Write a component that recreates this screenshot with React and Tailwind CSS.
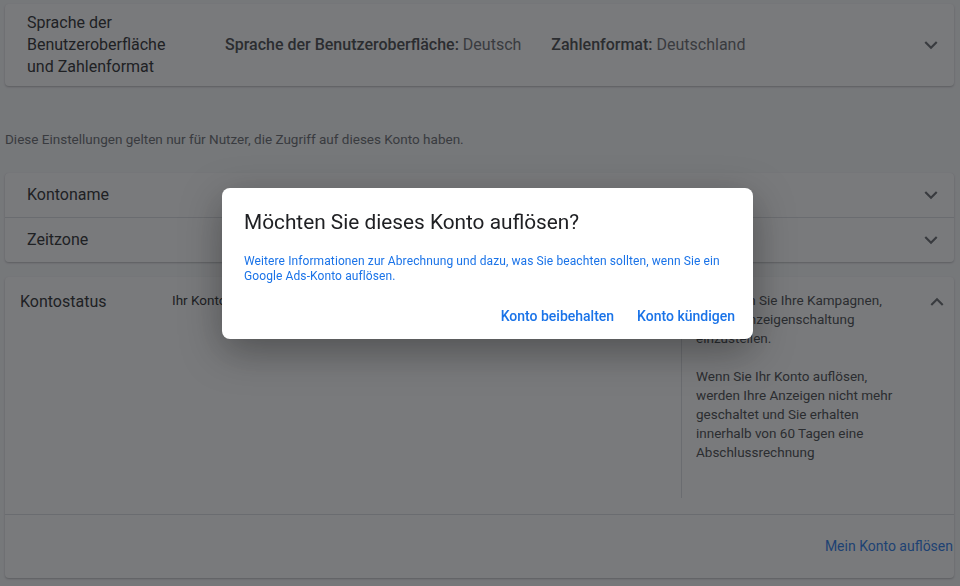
import React from "react";

// Material-style chevrons
const ChevronDown = () => (
  <svg width="26" height="26" viewBox="0 0 24 24" className="fill-[#5f6368]">
    <path d="M16.59 8.59L12 13.17 7.41 8.59 6 10l6 6 6-6z" />
  </svg>
);

const ChevronUp = () => (
  <svg width="26" height="26" viewBox="0 0 24 24" className="fill-[#5f6368]">
    <path d="M12 8l-6 6 1.41 1.41L12 10.83l4.59 4.58L18 14z" />
  </svg>
);

function SimpleRow({ title }) {
  return (
    <div className="flex h-[44px] items-center bg-white pl-[22px] pr-[10px]">
      <div className="flex-1 text-[16px] text-[#202124]">{title}</div>
      <ChevronDown />
    </div>
  );
}

function ConfirmDialog() {
  return (
    <div className="fixed left-[222px] top-[188px] flex h-[151px] w-[531px] flex-col rounded-lg bg-white shadow-[0_12px_40px_rgba(0,0,0,0.35)]">
      <div className="px-[22px] pt-[19px]">
        <h2 className="text-[20.8px] leading-[30px] text-[#202124]">
          Möchten Sie dieses Konto auflösen?
        </h2>
        <p className="mt-[17px] text-[12px] leading-[15px] tracking-[0.1px] text-[#1a73e8]">
          Weitere Informationen zur Abrechnung und dazu, was Sie beachten sollten, wenn Sie ein
          <br />
          Google Ads-Konto auflösen.
        </p>
      </div>
      <div className="mt-auto flex justify-end gap-[7px] pb-[5px] pr-[10px]">
        <button className="h-[36px] px-2 text-[14px] font-medium text-[#1a73e8]">Konto beibehalten</button>
        <button className="h-[36px] px-2 text-[14px] font-medium text-[#1a73e8]">Konto kündigen</button>
      </div>
    </div>
  );
}

export default function App() {
  return (
    <div className="relative h-[586px] overflow-hidden bg-[#f8f9fa] font-[Roboto,sans-serif]">
      <div className="pl-[5px] pr-[6px] pt-[4px]">
        {/* Sprache / Zahlenformat */}
        <div className="flex h-[82px] items-center rounded-sm bg-white pl-[22px] pr-[10px] shadow-[0_1px_2px_rgba(60,64,67,0.35)]">
          <div className="w-[198px] text-[16px] leading-[22px] text-[#202124]">
            Sprache der
            <br />
            Benutzeroberfläche
            <br />
            und Zahlenformat
          </div>
          <div className="flex flex-1 gap-[30px] text-[16px] text-[#5f6368]">
            <span>
              <span className="font-medium text-[#3c4043]">Sprache der Benutzeroberfläche:</span> Deutsch
            </span>
            <span>
              <span className="font-medium text-[#3c4043]">Zahlenformat:</span> Deutschland
            </span>
          </div>
          <ChevronDown />
        </div>

        <p className="mt-[44px] text-[13.5px] leading-[18px] text-[#5f6368]">
          Diese Einstellungen gelten nur für Nutzer, die Zugriff auf dieses Konto haben.
        </p>

        {/* Kontoname / Zeitzone */}
        <div className="mt-[25px] flex flex-col gap-px overflow-hidden rounded-sm bg-[#dadce0] shadow-[0_1px_2px_rgba(60,64,67,0.35)]">
          <SimpleRow title="Kontoname" />
          <SimpleRow title="Zeitzone" />
        </div>

        {/* Kontostatus */}
        <div className="mt-[15px] flex h-[301px] flex-col rounded-sm bg-white shadow-[0_1px_2px_rgba(60,64,67,0.35)]">
          <div className="flex flex-1 pt-[14px]">
            <div className="w-[167px] pl-[15px] text-[16px] leading-[22px] text-[#202124]">Kontostatus</div>
            <div className="w-[509px] text-[13.5px] leading-[18px] text-[#202124]">Ihr Konto ist aktiv.</div>
            <div className="mb-[16px] mt-[-6px] w-px bg-[#dadce0]" />
            <div className="w-[222px] pl-[14px] text-[13.5px] leading-[19px] text-[#3c4043]">
              Pausieren Sie Ihre Kampagnen,
              <br />
              um die Anzeigenschaltung
              <br />
              einzustellen.
              <br />
              <br />
              Wenn Sie Ihr Konto auflösen,
              <br />
              werden Ihre Anzeigen nicht mehr
              <br />
              geschaltet und Sie erhalten
              <br />
              innerhalb von 60 Tagen eine
              <br />
              Abschlussrechnung
            </div>
            <div className="ml-auto mt-[-2px] pr-[4px]">
              <ChevronUp />
            </div>
          </div>
          <div className="flex h-[64px] items-center justify-end border-t border-[#dadce0] pr-[1px]">
            <button className="text-[14px] text-[#1a73e8]">Mein Konto auflösen</button>
          </div>
        </div>
      </div>

      {/* scrim */}
      <div className="fixed inset-0 bg-[#202124]/60" />
      <ConfirmDialog />
    </div>
  );
}
